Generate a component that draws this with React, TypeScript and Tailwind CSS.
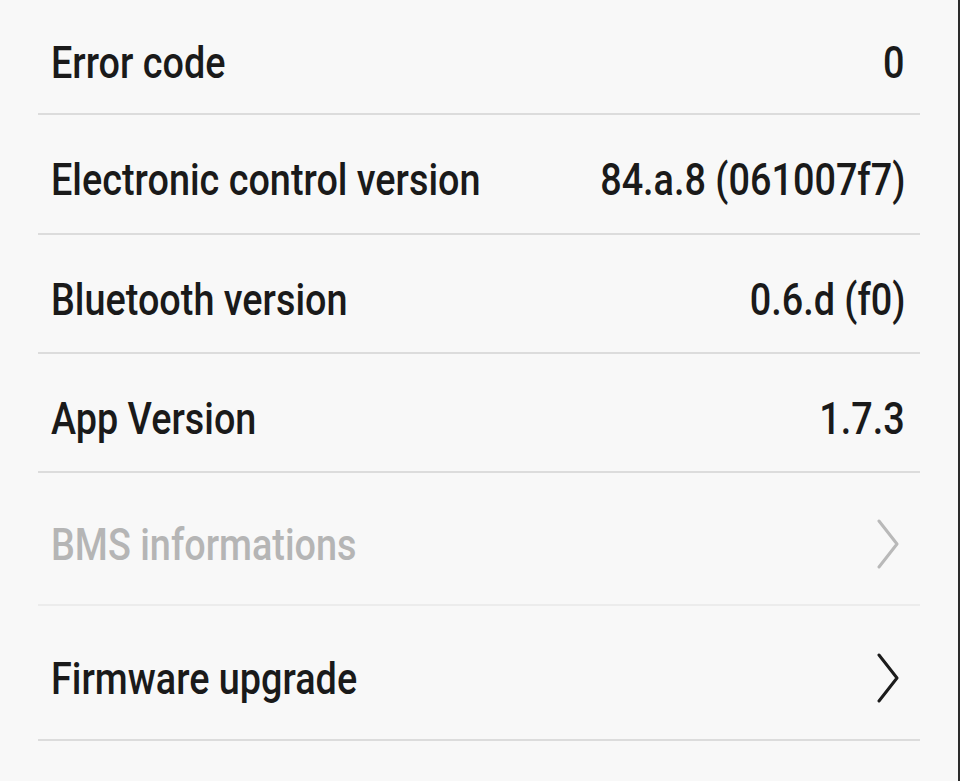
const rows = [
  { label: "Error code", value: "0", h: "h-[115px]" },
  { label: "Electronic control version", value: "84.a.8 (061007f7)", h: "h-[120px]" },
  { label: "Bluetooth version", value: "0.6.d (f0)", h: "h-[119px]" },
  { label: "App Version", value: "1.7.3", h: "h-[119px]" },
];

function Chevron({ muted }: { muted?: boolean }) {
  return (
    <svg width="24" height="50" viewBox="0 0 24 50" fill="none" className="ml-auto mr-[5px] shrink-0">
      <polyline
        points="3,2 21,25 3,48"
        stroke={muted ? "#b9b9b9" : "#1c1c1c"}
        strokeWidth="3"
        strokeLinecap="round"
        strokeLinejoin="round"
      />
    </svg>
  );
}

const rowBase =
  "shrink-0 flex items-center border-b-2 pt-[11px] pl-[13px] pr-[15px] text-[45px] font-medium leading-none whitespace-nowrap";

export default function App() {
  return (
    <div
      className="h-[781px] w-full bg-[#f8f8f8] border-r-2 border-[#2b2b2b] pl-[38px] pr-[38px] flex flex-col"
      style={{ fontFamily: "Roboto, 'Liberation Sans', sans-serif" }}
    >
      {rows.map((r) => (
        <div key={r.label} className={`${r.h} ${rowBase} border-[#dcdcdc] text-[#1a1a1a]`}>
          <span className="min-w-0 origin-left scale-x-[0.84]">{r.label}</span>
          <span className="ml-auto shrink-0 origin-right scale-x-[0.84]">{r.value}</span>
        </div>
      ))}

      <div className={`h-[133px] ${rowBase} border-[#ececec] text-[#b5b5b5]`}>
        <span className="min-w-0 origin-left scale-x-[0.84]">BMS informations</span>
        <Chevron muted />
      </div>

      <div className={`h-[135px] ${rowBase} border-[#dcdcdc] text-[#1a1a1a]`}>
        <span className="min-w-0 origin-left scale-x-[0.84]">Firmware upgrade</span>
        <Chevron />
      </div>
    </div>
  );
}
